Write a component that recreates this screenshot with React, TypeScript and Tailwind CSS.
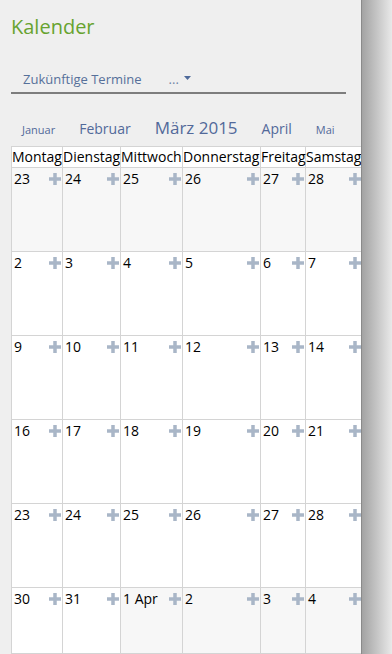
import React from "react";

const days = ["Montag", "Dienstag", "Mittwoch", "Donnerstag", "Freitag", "Samstag", "Sonntag"];

// each cell: label + whether it belongs to another month
type Cell = { label: string; other: boolean };

const weeks: Cell[][] = [
  ["23", "24", "25", "26", "27", "28", "1"].map((l) => ({ label: l, other: true })),
  ["2", "3", "4", "5", "6", "7", "8"].map((l) => ({ label: l, other: false })),
  ["9", "10", "11", "12", "13", "14", "15"].map((l) => ({ label: l, other: false })),
  ["16", "17", "18", "19", "20", "21", "22"].map((l) => ({ label: l, other: false })),
  ["23", "24", "25", "26", "27", "28", "29"].map((l) => ({ label: l, other: false })),
  [
    { label: "30", other: false },
    { label: "31", other: false },
    { label: "1 Apr", other: true },
    { label: "2", other: true },
    { label: "3", other: true },
    { label: "4", other: true },
    { label: "5", other: true },
  ],
];

function Plus() {
  return (
    <svg width="12" height="12" viewBox="0 0 12 12" className="shrink-0">
      <rect x="0" y="4.25" width="12" height="3.5" fill="#a9b6c7" />
      <rect x="4.25" y="0" width="3.5" height="12" fill="#a9b6c7" />
    </svg>
  );
}

export default function App() {
  return (
    <div className="flex h-[654px] w-[392px] overflow-hidden font-['Open_Sans',sans-serif]">
      <div className="h-full w-[361px] shrink-0 overflow-hidden bg-[#efefef]">
        <h1 className="pl-[11px] pt-[13px] text-[20px] leading-[28px] text-[#67a32f]">Kalender</h1>

        {/* tabs */}
        <div className="ml-[11px] mt-[29px] w-[335px] border-b-2 border-[#7d7d7d] pb-[4px]">
          <div className="flex items-center pl-[12px] text-[13px] leading-[18px]">
            <span className="text-[#56709a]">Zukünftige Termine</span>
            <span className="ml-[27px] text-[#6f86a6]">...</span>
            <svg width="7" height="4" viewBox="0 0 7 4" className="ml-[5px] mb-[2px]">
              <path d="M0 0h7L3.5 4z" fill="#4f6a9a" />
            </svg>
          </div>
        </div>

        {/* month nav */}
        <div className="mt-[22px] flex h-[24px] items-baseline gap-[24px] pl-[22px] text-[#52699a]">
          <span className="text-[11px] leading-[24px]">Januar</span>
          <span className="text-[14px] leading-[24px]">Februar</span>
          <span className="text-[17px] leading-[24px]">März 2015</span>
          <span className="text-[14px] leading-[24px]">April</span>
          <span className="text-[11px] leading-[24px]">Mai</span>
        </div>

        {/* calendar grid */}
        <div className="ml-[11px] mt-[6px] grid w-max grid-cols-[51px_58px_62px_78px_45px_57px_60px] border-l border-t border-[#d4d4d4] text-[14px] text-black">
          {days.map((d) => (
            <div key={d} className="h-[21px] whitespace-nowrap border-b border-r border-[#d4d4d4] bg-white leading-[20px]">
              {d}
            </div>
          ))}
          {weeks.map((week, wi) =>
            week.map((c, ci) => (
              <div
                key={`${wi}-${ci}`}
                className={`${wi === 5 ? "h-[66px]" : "h-[84px]"} border-b border-r border-[#d4d4d4] ${
                  c.other ? "bg-[#f7f7f7]" : "bg-white"
                }`}
              >
                <div className="flex items-start justify-between pl-[2px] pr-[1px] pt-[1px] leading-[20px]">
                  <span className="whitespace-nowrap">{c.label}</span>
                  <div className="mt-[4px]">
                    <Plus />
                  </div>
                </div>
              </div>
            ))
          )}
        </div>
      </div>
      <div className="h-full flex-1 border-l border-[#8a8a8a] bg-gradient-to-r from-[#a3a3a3] to-[#e9e9e9]" />
    </div>
  );
}
